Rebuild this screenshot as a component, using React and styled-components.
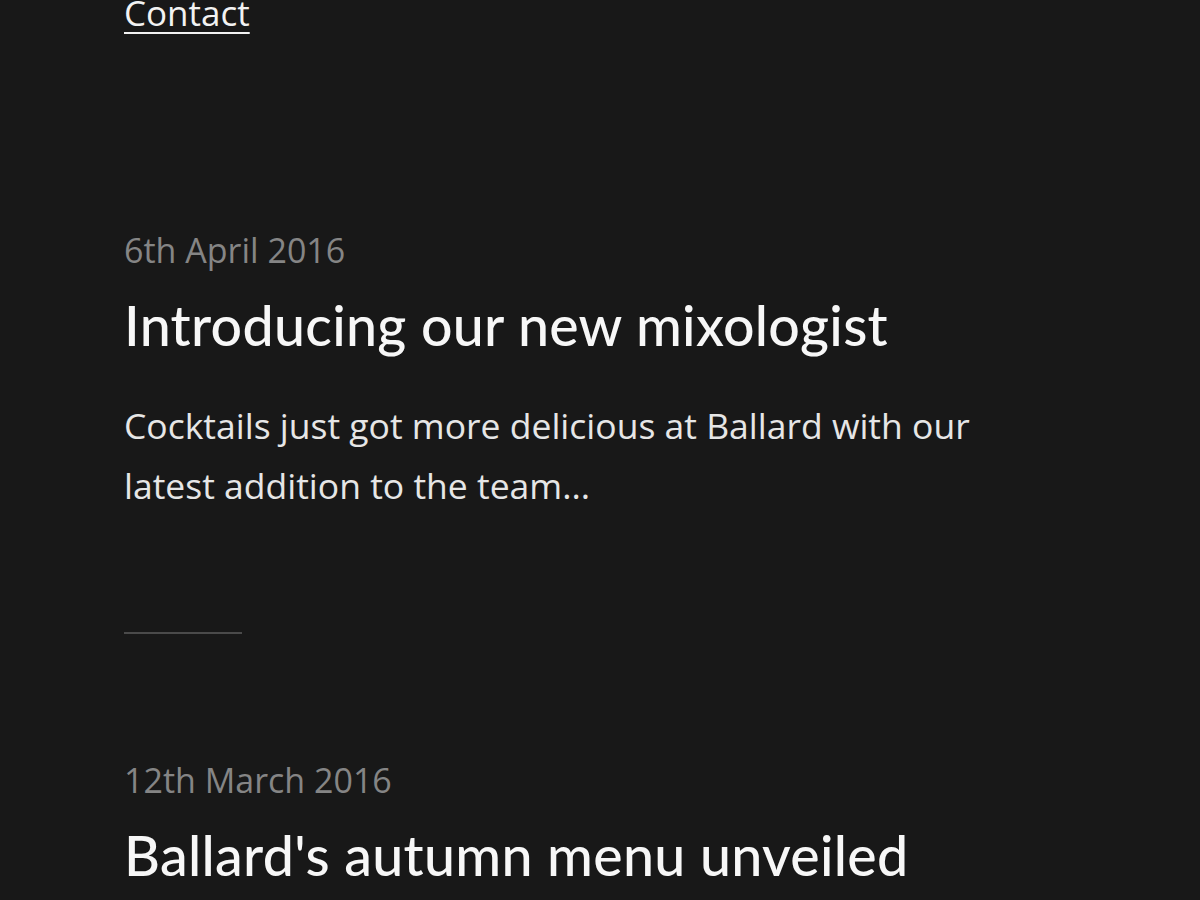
import styled, { createGlobalStyle } from "styled-components";

const GlobalStyle = createGlobalStyle`
  html, body {
    margin: 0;
    padding: 0;
    background: #181818;
  }
  body {
    font-family: "Open Sans", "Noto Sans", sans-serif;
    color: #e6e6e6;
    -webkit-font-smoothing: antialiased;
  }
`;

const posts = [
  {
    date: "6th April 2016",
    title: "Introducing our new mixologist",
    excerpt:
      "Cocktails just got more delicious at Ballard with our latest addition to the team...",
  },
  {
    date: "12th March 2016",
    title: "Ballard's autumn menu unveiled",
    excerpt: "",
  },
];

const App = () => {
  return (
    <>
      <GlobalStyle />
      <Page>
        <Nav>
          <NavLink href="#">Contact</NavLink>
        </Nav>
        <PostList>
          {posts.map((post, i) => (
            <Post key={post.title}>
              <PostDate>{post.date}</PostDate>
              <PostTitle>{post.title}</PostTitle>
              {post.excerpt && <Excerpt>{post.excerpt}</Excerpt>}
              {i < posts.length - 1 && <Divider />}
            </Post>
          ))}
        </PostList>
      </Page>
    </>
  );
};

export default App;

const Page = styled.div`
  height: 900px;
  overflow: hidden;
  padding: 0 124px;
  box-sizing: border-box;
`;

const Nav = styled.nav`
  margin-top: -9px;
  height: 44px;
`;

const NavLink = styled.a`
  font-size: 35px;
  line-height: 44px;
  color: #f2f2f2;
  text-decoration: underline;
  text-decoration-thickness: 2px;
  text-underline-offset: 6px;
`;

const PostList = styled.div`
  margin-top: 193px;
`;

const Post = styled.article`
  display: flex;
  flex-direction: column;
  align-items: flex-start;
`;

const PostDate = styled.div`
  font-size: 34px;
  line-height: 44px;
  color: #858585;
`;

const PostTitle = styled.h2`
  margin: 19px 0 0;
  font-family: "Lato", sans-serif;
  font-weight: 500;
  font-size: 55.5px;
  line-height: 68px;
  letter-spacing: 0.3px;
  color: #f7f7f7;
`;

const Excerpt = styled.p`
  margin: 36px 0 0;
  max-width: 900px;
  font-size: 35.5px;
  line-height: 60px;
  color: #e6e6e6;
`;

const Divider = styled.hr`
  width: 118px;
  height: 2px;
  margin: 117px 0 124px;
  border: 0;
  background: #4a4a4a;
`;
